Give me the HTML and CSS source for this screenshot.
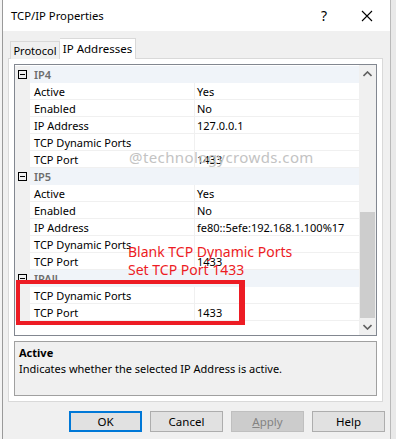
FILE: index.html
```html
<!DOCTYPE html>
<html lang="en">
<head>
  <meta charset="UTF-8" />
  <title>TCP/IP Properties</title>
  <link rel="stylesheet" href="styles.css">
</head>
<body>

<div class="backdrop-edge"></div>

<div class="dialog">
  <div class="titlebar">
    <span class="title">TCP/IP Properties</span>
    <span class="help-btn">?</span>
    <span class="close-btn">
      <svg width="12" height="12" viewBox="0 0 12 12"><path d="M1 1 L11 11 M11 1 L1 11" stroke="#000" stroke-width="1.1" fill="none"/></svg>
    </span>
  </div>

  <div class="content">
    <div class="tabs">
      <div class="tab">Protocol</div>
      <div class="tab active">IP Addresses</div>
    </div>

    <div class="panel">
      <div class="grid">
        <div class="rows">
          <div class="row cat"><span class="margin"><span class="toggle"></span></span><span class="name">IP4</span></div>
          <div class="row"><span class="margin"></span><span class="name">Active</span><span class="value">Yes</span></div>
          <div class="row"><span class="margin"></span><span class="name">Enabled</span><span class="value">No</span></div>
          <div class="row"><span class="margin"></span><span class="name">IP Address</span><span class="value">127.0.0.1</span></div>
          <div class="row"><span class="margin"></span><span class="name">TCP Dynamic Ports</span><span class="value"></span></div>
          <div class="row"><span class="margin"></span><span class="name">TCP Port</span><span class="value">1433</span></div>

          <div class="row cat"><span class="margin"><span class="toggle"></span></span><span class="name">IP5</span></div>
          <div class="row"><span class="margin"></span><span class="name">Active</span><span class="value">Yes</span></div>
          <div class="row"><span class="margin"></span><span class="name">Enabled</span><span class="value">No</span></div>
          <div class="row"><span class="margin"></span><span class="name">IP Address</span><span class="value">fe80::5efe:192.168.1.100%17</span></div>
          <div class="row"><span class="margin"></span><span class="name">TCP Dynamic Ports</span><span class="value"></span></div>
          <div class="row"><span class="margin"></span><span class="name">TCP Port</span><span class="value">1433</span></div>

          <div class="row cat"><span class="margin"><span class="toggle"></span></span><span class="name">IPAll</span></div>
          <div class="row"><span class="margin"></span><span class="name">TCP Dynamic Ports</span><span class="value"></span></div>
          <div class="row"><span class="margin"></span><span class="name">TCP Port</span><span class="value">1433</span></div>
        </div>
        <div class="scrollbar">
          <span class="arrow up">
            <svg width="9" height="6" viewBox="0 0 9 6"><path d="M0.5 5 L4.5 1 L8.5 5" stroke="#606060" stroke-width="1.6" fill="none"/></svg>
          </span>
          <div class="track"><div class="thumb"></div></div>
          <span class="arrow down">
            <svg width="9" height="6" viewBox="0 0 9 6"><path d="M0.5 1 L4.5 5 L8.5 1" stroke="#606060" stroke-width="1.6" fill="none"/></svg>
          </span>
        </div>
      </div>

      <div class="description">
        <div class="desc-title">Active</div>
        <div class="desc-text">Indicates whether the selected IP Address is active.</div>
      </div>
    </div>

    <div class="buttons">
      <button class="btn default">OK</button>
      <button class="btn">Cancel</button>
      <button class="btn disabled"><u>A</u>pply</button>
      <button class="btn">Help</button>
    </div>
  </div>
</div>

<!-- annotations drawn over the screenshot -->
<div class="watermark">@technologycrowds.com</div>
<div class="note">Blank TCP Dynamic Ports<br>Set TCP Port 1433</div>
<div class="highlight"></div>

</body>
</html>
```

FILE: styles.css
```css
* {
  box-sizing: border-box;
}

body {
  margin: 0;
  padding: 0;
  width: 396px;
  height: 439px;
  overflow: hidden;
  background: #e9e9e9;
  font-family: 'Noto Sans', 'Open Sans', sans-serif;
  font-size: 11px;
  color: #000;
  display: flex;
  position: relative;
}

.backdrop-edge {
  width: 3px;
  background: #f4f4f4;
  border-right: 1px solid #9a9a9a;
}

.dialog {
  width: 388px;
  height: 439px;
  background: #f0f0f0;
  border-right: 1px solid #b9b9b9;
  display: flex;
  flex-direction: column;
}

.titlebar {
  height: 31px;
  background: #fff;
  display: flex;
  align-items: center;
  padding-left: 8px;
  font-size: 11.3px;
}

.title {
  flex: 1;
  padding-bottom: 1px;
}

.help-btn {
  width: 46px;
  text-align: center;
  font-size: 14px;
  margin-right: -3px;
}

.close-btn {
  width: 46px;
  display: flex;
  justify-content: center;
}

.content {
  padding: 7px 0 0 5px;
}

.tabs {
  display: flex;
  align-items: flex-end;
  height: 21px;
  margin-left: 2px;
  margin-bottom: -1px;
  position: relative;
}

.tab {
  height: 18px;
  padding: 0;
  border: 1px solid #d9d9d9;
  border-bottom: none;
  background: #f0f0f0;
  line-height: 17px;
  width: 50px;
  text-align: center;
  white-space: nowrap;
}

.tab.active {
  height: 21px;
  width: 76px;
  background: #fff;
  border-left: none;
  line-height: 19px;
  font-size: 11.5px;
}

.panel {
  width: 375px;
  background: #fff;
  border: 1px solid #d9d9d9;
  padding: 5px;
}

.grid {
  height: 272px;
  border: 1px solid #828790;
  display: flex;
  overflow: hidden;
}

.rows {
  flex: 1;
  padding-top: 1px;
  background: #fff;
}

.row {
  display: flex;
  height: 17px;
  line-height: 17px;
}

.row .margin {
  width: 15px;
  background: #f0f0f0;
  display: flex;
  align-items: center;
  justify-content: center;
}

.row .name {
  width: 165px;
  padding-left: 4px;
  border-right: 1px solid #f0f0f0;
  border-bottom: 1px solid #f0f0f0;
  white-space: nowrap;
}

.row .value {
  flex: 1;
  padding-left: 2px;
  border-bottom: 1px solid #f0f0f0;
  white-space: nowrap;
}

.row.cat .name {
  flex: 1;
  background: #f0f4f9;
  color: #6d6d6d;
  font-weight: 600;
  border: none;
}

.toggle {
  width: 9px;
  height: 9px;
  border: 1px solid #000;
  position: relative;
}

.toggle::after {
  content: '';
  position: absolute;
  left: 1px;
  right: 1px;
  top: 3px;
  height: 1px;
  background: #000;
}

.scrollbar {
  width: 17px;
  background: #f0f0f0;
  display: flex;
  flex-direction: column;
}

.arrow {
  height: 17px;
  display: flex;
  justify-content: center;
  align-items: center;
}

.track {
  flex: 1;
  padding-top: 130px;
}

.thumb {
  height: 106px;
  background: #cdcdcd;
  margin: 0 1px;
}

.description {
  margin-top: 5px;
  height: 55px;
  background: #f0f0f0;
  border: 1px solid #a0a0a0;
  padding: 2px 4px;
}

.desc-title {
  font-weight: 700;
  line-height: 17px;
}

.desc-text {
  line-height: 16px;
}

.buttons {
  display: flex;
  justify-content: flex-end;
  gap: 8px;
  width: 377px;
  margin-top: 9px;
}

.btn {
  width: 73px;
  height: 21px;
  padding: 0;
  background: #e1e1e1;
  border: 1px solid #adadad;
  font-family: inherit;
  font-size: 11.5px;
  color: #000;
}

.btn.default {
  border: 2px solid #0078d7;
}

.btn.disabled {
  background: #cccccc;
  border-color: #bfbfbf;
  color: #838383;
}

.watermark {
  position: absolute;
  left: 129px;
  top: 147px;
  font-size: 15px;
  color: #c3c3c3;
  letter-spacing: 0.4px;
}

.note {
  position: absolute;
  left: 128px;
  top: 243px;
  font-size: 14px;
  line-height: 18px;
  color: #ed1c24;
}

.highlight {
  position: absolute;
  left: 16px;
  top: 280px;
  width: 229px;
  height: 45px;
  border: 4px solid #ed1c24;
  border-right-width: 6px;
}
```
